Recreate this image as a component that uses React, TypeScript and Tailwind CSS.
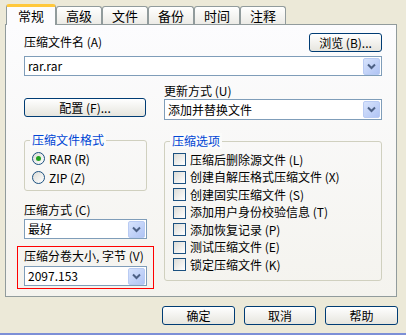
import { ReactNode } from "react";

const font = { fontFamily: '"Noto Sans CJK SC", "Liberation Sans", sans-serif' };

function Tab({ label, active }: { label: string; active?: boolean }) {
  if (active) {
    return (
      <div className="relative z-10 -mb-px flex h-[21px] w-[50px] items-start justify-center rounded-t-[3px] border-x border-[#919B9C] border-t-[3px] border-t-[#FFC83C] bg-[#FCFCFE] pt-[1px] text-[13px] leading-[16px] text-black">
        {label}
      </div>
    );
  }
  return (
    <div className="flex h-[18px] w-[46px] items-start justify-center rounded-t-[3px] border border-b-0 border-[#919B9C] bg-gradient-to-b from-white to-[#ECEBE6] pt-[1px] text-[13px] leading-[16px] text-black">
      {label}
    </div>
  );
}

function Arrow() {
  return (
    <div className="flex h-[17px] w-[17px] items-center justify-center rounded-[2px] border border-[#B9CBF3] bg-gradient-to-br from-[#D7E3FC] to-[#B0C4F4]">
      <svg width="9" height="7" viewBox="0 0 9 7">
        <path d="M1 1.5 L4.5 5 L8 1.5" fill="none" stroke="#4D6185" strokeWidth="2" />
      </svg>
    </div>
  );
}

function Combo({ value, className = "" }: { value: string; className?: string }) {
  return (
    <div className={`flex h-[20px] items-center justify-between border border-[#7F9DB9] bg-white pl-[3px] pr-[1px] ${className}`}>
      <span className="text-[12px] leading-[14px] text-black">{value}</span>
      <Arrow />
    </div>
  );
}

function Button({ children, className = "" }: { children: ReactNode; className?: string }) {
  return (
    <div className={`flex h-[19px] items-center justify-center rounded-[3px] border border-[#003C74] bg-gradient-to-b from-white to-[#E6E5DE] text-[12px] leading-[14px] text-black ${className}`}>
      {children}
    </div>
  );
}

function Group({ title, children, className = "" }: { title: string; children: ReactNode; className?: string }) {
  return (
    <div className={`relative rounded-[3px] border border-[#D0D0BF] ${className}`}>
      <span className="absolute -top-[9px] left-[5px] bg-[#FBFBFA] px-[2px] text-[12px] leading-[16px] text-[#0046D5]">
        {title}
      </span>
      {children}
    </div>
  );
}

function Radio({ label, checked }: { label: string; checked?: boolean }) {
  return (
    <div className="flex h-[19px] items-center gap-[4px]">
      <div className="flex h-[13px] w-[13px] items-center justify-center rounded-full border border-[#1C5180] bg-gradient-to-br from-[#DCDCD7] to-white">
        {checked && <div className="h-[5px] w-[5px] rounded-full bg-[#21A121]" />}
      </div>
      <span className="text-[12px] leading-[14px] text-black">{label}</span>
    </div>
  );
}

function Check({ label }: { label: string }) {
  return (
    <div className="flex h-[17.5px] items-center gap-[4px]">
      <div className="h-[13px] w-[13px] border border-[#1C5180] bg-gradient-to-br from-[#DCDCD7] to-white" />
      <span className="text-[12px] leading-[14px] text-black">{label}</span>
    </div>
  );
}

export default function App() {
  const options = [
    "压缩后删除源文件 (L)",
    "创建自解压格式压缩文件 (X)",
    "创建固实压缩文件 (S)",
    "添加用户身份校验信息 (T)",
    "添加恢复记录 (P)",
    "测试压缩文件 (E)",
    "锁定压缩文件 (K)",
  ];

  return (
    <div className="flex h-[335px] w-[406px] flex-col bg-[#ECE9D8]" style={font}>
      <div className="flex flex-1 flex-col px-[5px] pt-[4px]">
        <div className="flex items-end pl-[1px]">
          <Tab label="常规" active />
          <Tab label="高级" />
          <Tab label="文件" />
          <Tab label="备份" />
          <Tab label="时间" />
          <Tab label="注释" />
        </div>

        <div className="flex h-[273px] w-[392px] flex-col border border-[#919B9C] bg-gradient-to-b from-[#FCFCFE] to-[#F4F3EE] pl-[18px] pr-[14px] pt-[8px]">
          <div className="flex items-end justify-between">
            <span className="mb-[3px] text-[12px] leading-[14px] text-black">压缩文件名 (A)</span>
            <Button className="w-[73px]">浏览 (B)...</Button>
          </div>
          <Combo value="rar.rar" className="mt-[4px]" />

          <div className="mt-[8px] grid grid-cols-[123px_218px] gap-x-[17px]">
            <div className="flex flex-col">
              <Button className="mt-[14px] w-[122px]">配置 (F)...</Button>
              <Group title="压缩文件格式" className="mt-[23px] h-[51px] pl-[7px] pt-[8px]">
                <Radio label="RAR (R)" checked />
                <Radio label="ZIP (Z)" />
              </Group>
              <span className="mt-[12px] text-[12px] leading-[14px] text-black">压缩方式 (C)</span>
              <Combo value="最好" className="mt-[2px] h-[19px]" />
              <div className="-mx-[7px] mt-[7px] flex h-[43px] flex-col border border-[#FF0000] px-[6px] pt-[2px]">
                <span className="text-[12px] leading-[14px] text-black">压缩分卷大小, 字节 (V)</span>
                <Combo value="2097.153" className="mt-[3px] h-[19px]" />
              </div>
            </div>

            <div className="flex flex-col">
              <span className="text-[12px] leading-[14px] text-black">更新方式 (U)</span>
              <Combo value="添加并替换文件" className="mt-[1px] h-[21px]" />
              <Group title="压缩选项" className="mt-[21px] h-[140px] pl-[8px] pt-[9px]">
                {options.map((o) => (
                  <Check key={o} label={o} />
                ))}
              </Group>
            </div>
          </div>
        </div>

        <div className="mt-[9px] flex justify-end gap-[9px] pr-[3px]">
          <Button className="w-[73px]">确定</Button>
          <Button className="w-[72px]">取消</Button>
          <Button className="w-[73px]">帮助</Button>
        </div>
      </div>
      <div className="h-[2px] bg-[#7C8FD6]" />
    </div>
  );
}
